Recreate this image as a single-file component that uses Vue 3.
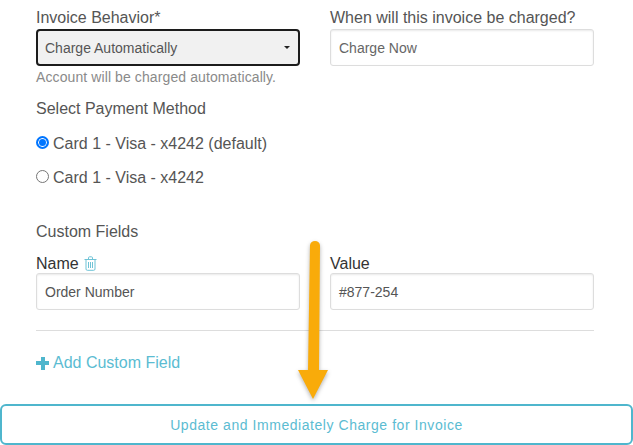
<template>
  <div class="page">
    <div class="row">
      <div class="col">
        <label class="label">Invoice Behavior*</label>
        <div class="select">
          <span>Charge Automatically</span>
          <span class="caret"></span>
        </div>
        <p class="help">Account will be charged automatically.</p>
      </div>
      <div class="col">
        <label class="label">When will this invoice be charged?</label>
        <div class="input muted">Charge Now</div>
      </div>
    </div>

    <h4 class="section">Select Payment Method</h4>
    <div v-for="card in cards" :key="card.label" class="radio-row">
      <span class="radio" :class="{ checked: card.checked }"></span>
      <span>{{ card.label }}</span>
    </div>

    <h4 class="section custom">Custom Fields</h4>
    <div class="row fields">
      <div class="col">
        <label class="label dark">
          Name
          <svg class="trash" width="13" height="15" viewBox="0 0 13 15" fill="none" stroke="#6fc3d6" stroke-width="1">
            <path d="M0.500 3.500h12M2 3.500v9.500a1.300 1.300 0 0 0 1.300 1.300h6.400a1.300 1.300 0 0 0 1.300-1.300V3.500" />
            <path d="M4.500 3.200V1.800a1 1 0 0 1 1-1h2a1 1 0 0 1 1 1v1.400" />
            <path d="M4.500 6v6M6.500 6v6M8.500 6v6" />
          </svg>
        </label>
        <div class="input">Order Number</div>
      </div>
      <div class="col">
        <label class="label dark">Value</label>
        <div class="input">#877-254</div>
      </div>
    </div>
    <hr class="divider">

    <a class="add-field"><span class="plus"></span>Add Custom Field</a>

    <button class="submit">Update and Immediately Charge for Invoice</button>

    <!-- annotation arrow on top of the form -->
    <svg class="arrow" width="50" height="170" viewBox="0 0 50 170">
      <path d="M15 4.500a5 4.500 0 0 1 10 0L24 129H33L18 158L3 129H13Z" fill="#f9ab0a" />
    </svg>
  </div>
</template>

<script setup>
const cards = [
  { label: 'Card 1 - Visa - x4242 (default)', checked: true },
  { label: 'Card 1 - Visa - x4242', checked: false }
]
</script>

<style>
html, body {
  margin: 0;
  background: #fff;
}
</style>

<style scoped>
.page {
  position: relative;
  width: 633px;
  height: 445px;
  overflow: hidden;
  box-sizing: border-box;
  padding: 9px 39px 0 36px;
  background: #fff;
  font-family: "Liberation Sans", Arial, sans-serif;
  font-size: 16px;
  color: #4a4a4a;
}

.row {
  display: grid;
  grid-template-columns: 264px 264px;
  column-gap: 30px;
}

.label {
  display: block;
  height: 20px;
  line-height: 18px;
  font-size: 16px;
  color: #555;
}

.label.dark {
  display: flex;
  align-items: center;
  gap: 5px;
  height: 19px;
  color: #333;
}

.select,
.input {
  box-sizing: border-box;
  height: 37px;
  padding: 0 8px;
  display: flex;
  align-items: center;
  border-radius: 3px;
  font-size: 14px;
  color: #555;
}

.select {
  justify-content: space-between;
  padding: 0 7px;
  background: #f1f1f1;
  border: 2px solid #1c1c1c;
  border-radius: 4px;
}

.caret {
  width: 0;
  height: 0;
  margin-right: 1px;
  border-left: 3px solid transparent;
  border-right: 3px solid transparent;
  border-top: 3px solid #222;
}

.input {
  background: #fff;
  border: 1px solid #ddd;
  box-shadow: inset 0 1px 2px rgba(0, 0, 0, 0.09);
}

.input.muted {
  color: #666;
}

.help {
  margin: 3px 0 0;
  font-size: 14px;
  line-height: 17px;
  letter-spacing: 0.1px;
  color: #8a8a8a;
}

.section {
  margin: 14px 0 0;
  font-size: 16px;
  font-weight: 400;
  line-height: 18px;
  color: #555;
}

.section.custom {
  margin-top: 35px;
}

.radio-row {
  display: flex;
  align-items: center;
  gap: 4px;
  height: 20px;
  margin-top: 14px;
  font-size: 16px;
  color: #555;
}

.section + .radio-row {
  margin-top: 16px;
}

.radio {
  box-sizing: border-box;
  width: 13px;
  height: 13px;
  margin-top: -3px;
  border: 1px solid #767676;
  border-radius: 50%;
  background: #fff;
}

.radio.checked {
  border: 2px solid #0075ff;
  box-shadow: inset 0 0 0 1px #fff;
  background: #0075ff;
}

.fields {
  margin-top: 13px;
}

.trash {
  margin-top: -1px;
}

.divider {
  margin: 20px 0 0;
  border: 0;
  border-top: 1px solid #ddd;
}

.add-field {
  display: flex;
  align-items: center;
  gap: 4px;
  margin-top: 23px;
  height: 18px;
  font-size: 16px;
  color: #5bbcd2;
}

.plus {
  width: 13px;
  height: 13px;
  background:
    linear-gradient(#4fb6cd, #4fb6cd) center / 13px 4px no-repeat,
    linear-gradient(#4fb6cd, #4fb6cd) center / 4px 13px no-repeat;
}

.submit {
  position: absolute;
  left: 0;
  top: 404px;
  box-sizing: border-box;
  width: 633px;
  height: 41px;
  border: 2px solid #4fb6cd;
  border-radius: 6px;
  background: #fff;
  font-family: inherit;
  font-size: 14px;
  letter-spacing: 0.55px;
  color: #5bbcd2;
}

.arrow {
  position: absolute;
  left: 295px;
  top: 241px;
  filter: drop-shadow(0 2px 2px rgba(0, 0, 0, 0.3));
}
</style>
